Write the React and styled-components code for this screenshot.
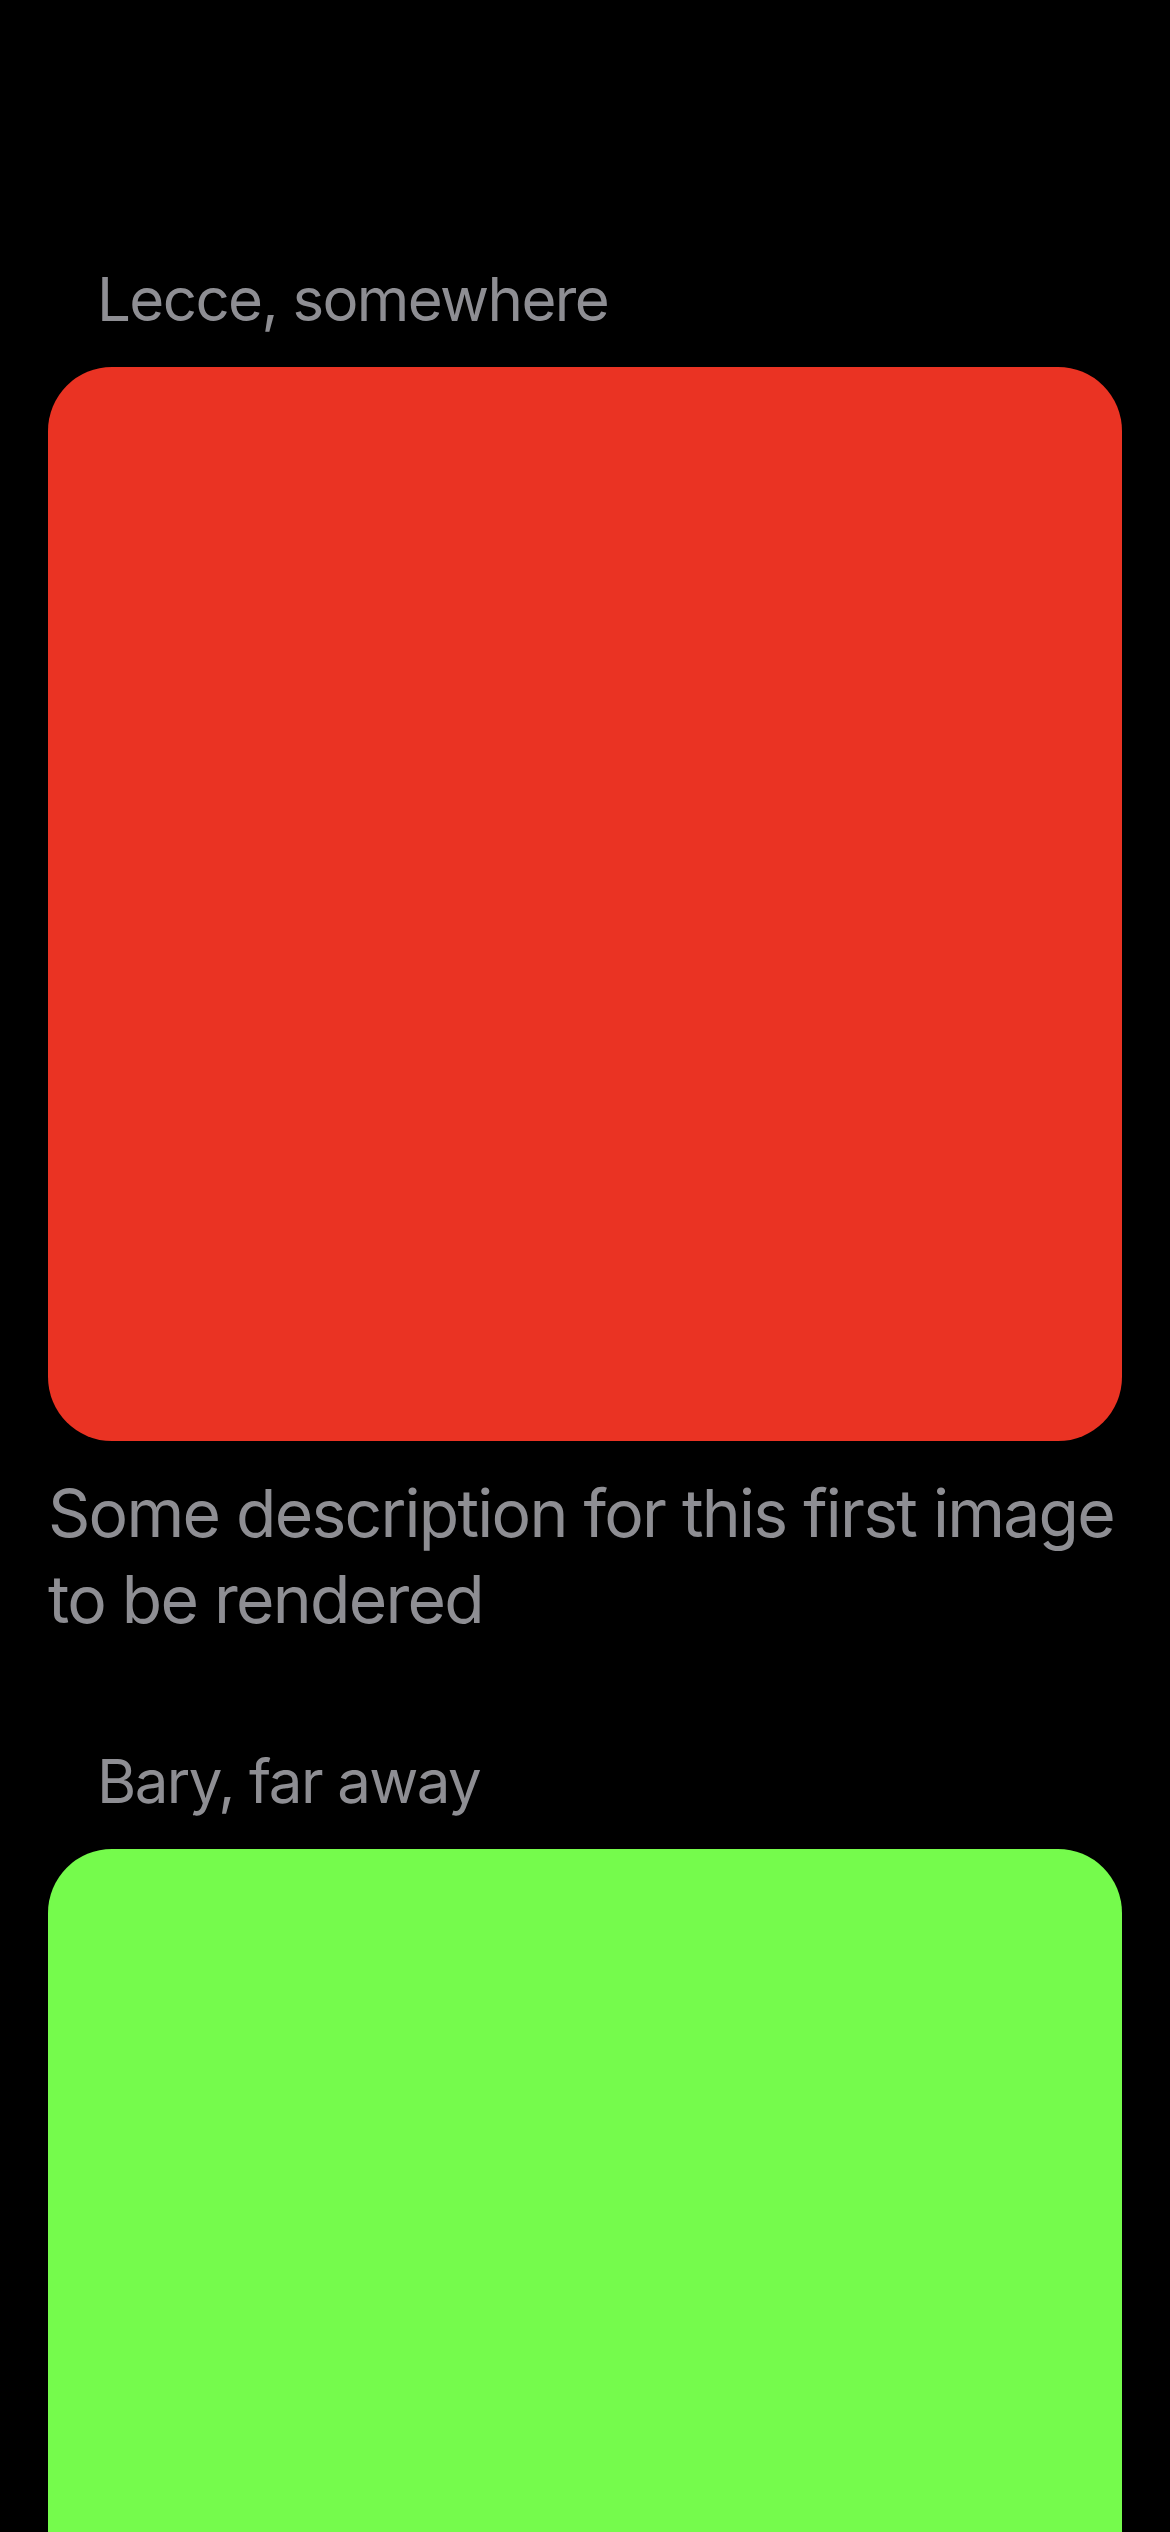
import React from "react"
import styled, { createGlobalStyle } from "styled-components"

const GlobalStyle = createGlobalStyle`
  html, body {
    margin: 0;
    padding: 0;
    background: #000000;
  }
  body {
    font-family: Inter, "Noto Sans", sans-serif;
    -webkit-font-smoothing: antialiased;
  }
`

const places = [
  {
    id: 1,
    title: "Lecce, somewhere",
    color: "#EA3323",
    description: "Some description for this first image to be rendered",
  },
  {
    id: 2,
    title: "Bary, far away",
    color: "#75FB4C",
    description: "Another description for the second image",
  },
]

const Screen = styled.div`
  min-height: 2532px;
  background: #000000;
`

const List = styled.div`
  display: flex;
  flex-direction: column;
  gap: 103px;
  padding: 263px 48px 0;
`

const Item = styled.div`
  display: flex;
  flex-direction: column;
`

const Title = styled.div`
  font-size: 60px;
  line-height: 72px;
  letter-spacing: -1.6px;
  color: #8e8e93;
  padding-left: 49px;
  margin-bottom: 32px;
`

const Picture = styled.div`
  width: 1074px;
  height: 1074px;
  border-radius: 64px;
  background-color: ${props => props.color};
`

const Description = styled.div`
  font-size: 66px;
  line-height: 86px;
  letter-spacing: -1.75px;
  color: #8e8e93;
  margin-top: 29px;
`

const App = () => {
  return (
    <Screen>
      <GlobalStyle />
      <List>
        {places.map(place => (
          <Item key={place.id}>
            <Title>{place.title}</Title>
            <Picture color={place.color} />
            <Description>{place.description}</Description>
          </Item>
        ))}
      </List>
    </Screen>
  )
}

export default App
